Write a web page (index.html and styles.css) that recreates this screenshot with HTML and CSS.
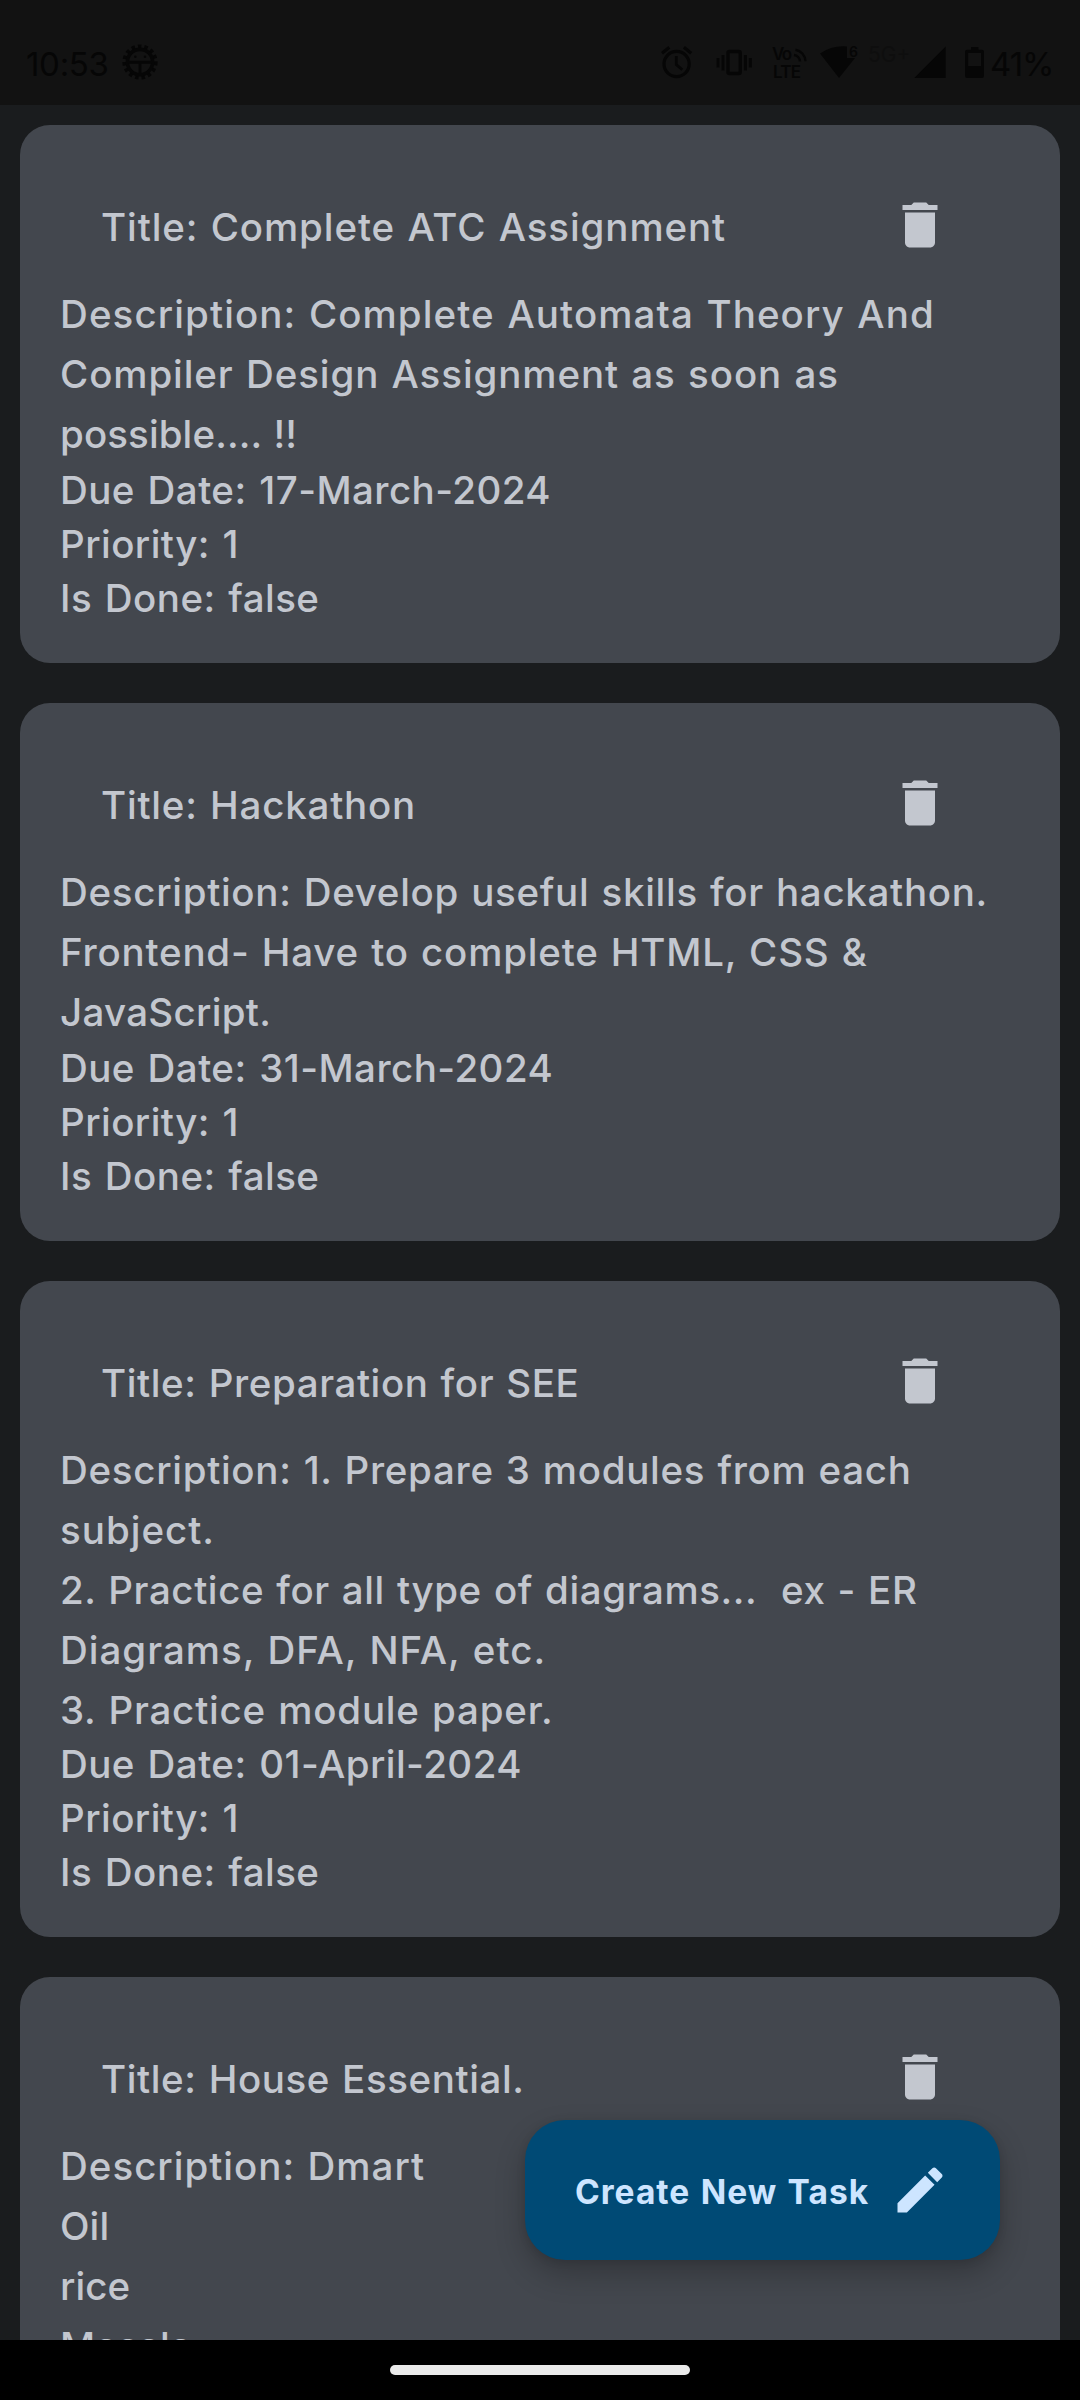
FILE: index.html
```html
<!DOCTYPE html>
<html lang="en">
<head>
<meta charset="utf-8">
<title>Tasks</title>
<link rel="stylesheet" href="styles.css">
</head>
<body>
<svg class="defs" aria-hidden="true">
  <symbol id="trash" viewBox="0 0 24 24"><path d="M6 19c0 1.1.9 2 2 2h8c1.1 0 2-.9 2-2V7H6v12zM19 4h-3.5l-1-1h-5l-1 1H5v2h14V4z"/></symbol>
</svg>
<div class="screen">
  <header class="status">
    <span class="clock">10:53</span>
    <svg class="s-bug" width="36" height="36" viewBox="122 44 36 36">
      <circle cx="140" cy="62" r="15.4" fill="none" stroke="#060606" stroke-width="4.4" stroke-dasharray="3.4 2.97"/>
      <circle cx="140" cy="62" r="12.6" fill="none" stroke="#060606" stroke-width="3.6"/>
      <path d="M128 62.2h24M140 62v13" stroke="#060606" stroke-width="3"/>
      <circle cx="135.3" cy="56.8" r="1.3"/><circle cx="145" cy="56.8" r="1.3"/>
    </svg>
    <span class="grow"></span>
    <svg class="s-alarm" width="32" height="36" viewBox="661 44 32 36" fill="none" stroke="#060606">
      <circle cx="676.6" cy="64" r="12.6" stroke-width="3.2"/>
      <path d="M676.3 56v8.5l6 5.2" stroke-width="2.8"/>
      <path d="M662 53.3l7.3-6M691.2 53.3l-7.3-6" stroke-width="3.2"/>
    </svg>
    <svg class="s-vibrate" width="36" height="36" viewBox="716 44 36 36" fill="none" stroke="#060606" stroke-width="3">
      <rect x="728" y="51.5" width="12.2" height="22" rx="1.5" stroke-width="3.4"/>
      <path d="M718 58v9.5M723 55v15.5M745.4 55v15.5M750.3 58v9.5"/>
    </svg>
    <svg class="s-volte" width="36" height="36" viewBox="772 44 36 36">
      <text x="772" y="60" class="volte" textLength="20">Vo</text>
      <text x="773" y="77.5" class="volte" textLength="28">LTE</text>
      <path d="M794 55a7 7 0 0 1 6 6.5M795.5 49.8a12 12 0 0 1 10 11.5" fill="none" stroke="#060606" stroke-width="2.4"/>
    </svg>
    <svg class="s-wifi" width="38" height="36" viewBox="820 44 38 36">
      <path d="M820 53.5Q832 45.2 847 46.4V58h8L839 78z"/>
      <text x="849" y="56.5" class="six">6</text>
    </svg>
    <span class="network">5G+</span>
    <svg class="s-signal" width="32" height="36" viewBox="914 44 32 36"><path d="M945.7 46.5V78H914.3z"/></svg>
    <svg class="s-battery" width="20" height="36" viewBox="965 44 20 36">
      <path fill-rule="evenodd" d="M971 47h7.5v2.7h3.5a2 2 0 0 1 2 2V76a2 2 0 0 1-2 2h-15a2 2 0 0 1-2-2V51.7a2 2 0 0 1 2-2h4zM968.2 53v13h12.9V53z"/>
    </svg>
    <span class="percent">41%</span>
  </header>

  <main class="list">
    <article class="card">
      <div class="head"><h2 class="title t15">Title: Complete ATC Assignment</h2><svg class="icon"><use href="#trash"/></svg></div>
      <p class="desc"><span class="line t18">Description: Complete Automata Theory And</span><span class="line t15">Compiler Design Assignment as soon as</span><span class="line t7">possible.... !!</span></p>
      <div class="meta"><span>Due Date: 17-March-2024</span><span>Priority: 1</span><span>Is Done: false</span></div>
    </article>
    <article class="card">
      <div class="head"><h2 class="title">Title: Hackathon</h2><svg class="icon"><use href="#trash"/></svg></div>
      <p class="desc"><span class="line t13">Description: Develop useful skills for hackathon.</span><span class="line">Frontend- Have to complete HTML, CSS &amp;</span><span class="line t11">JavaScript.</span></p>
      <div class="meta"><span>Due Date: 31-March-2024</span><span>Priority: 1</span><span>Is Done: false</span></div>
    </article>
    <article class="card tall">
      <div class="head"><h2 class="title t12">Title: Preparation for SEE</h2><svg class="icon"><use href="#trash"/></svg></div>
      <p class="desc"><span class="line t13">Description: 1. Prepare 3 modules from each</span><span class="line t17">subject.</span><span class="line t12">2. Practice for all type of diagrams...  ex - ER</span><span class="line t17">Diagrams, DFA, NFA, etc.</span><span class="line">3. Practice module paper.</span></p>
      <div class="meta"><span>Due Date: 01-April-2024</span><span>Priority: 1</span><span>Is Done: false</span></div>
    </article>
    <article class="card">
      <div class="head"><h2 class="title t12">Title: House Essential.</h2><svg class="icon"><use href="#trash"/></svg></div>
      <p class="desc"><span class="line t17">Description: Dmart</span><span class="line t7">Oil</span><span class="line t7">rice</span><span class="line t7">Masala</span></p>
    </article>
    <button class="fab"><span>Create New Task</span><svg class="icon" viewBox="0 0 24 24"><path d="M3 17.25V21h3.75L17.81 9.94l-3.75-3.75L3 17.25zM20.71 7.04c.39-.39.39-1.02 0-1.41l-2.34-2.34c-.39-.39-1.02-.39-1.41 0l-1.83 1.83 3.75 3.75 1.83-1.83z"/></svg></button>
  </main>
  <footer class="nav"><span class="pill"></span></footer>
</div>
</body>
</html>
```
FILE: styles.css
```css
* { box-sizing: border-box; margin: 0; padding: 0; }
body { background: #1a1c1e; font-family: Inter, "Open Sans", sans-serif; }
.defs { display: none; }
.screen { width: 1080px; height: 2400px; display: flex; flex-direction: column; overflow: hidden; background: #1a1c1e; }

.status { flex: none; height: 105px; padding: 44px 27px 0 26px; display: flex; align-items: flex-start; background: #121212; color: #060606; fill: #060606; }
.status svg { flex: none; display: block; }
.grow { flex: 1; }
.clock { width: 82px; font-size: 33px; line-height: 40px; letter-spacing: -0.3px; }
.s-bug { margin-left: 14px; }
.s-vibrate { margin-left: 23px; }
.s-volte { margin-left: 20px; }
.s-wifi { margin-left: 12px; }
.network { width: 41px; margin-left: 10px; font-size: 21px; line-height: 22px; color: #0e0e0e; }
.s-signal { margin-left: 5px; }
.s-battery { margin-left: 19px; }
.percent { width: 63px; margin-left: 5px; font-size: 33px; line-height: 40px; letter-spacing: -1px; white-space: nowrap; }
.volte { font: 600 17px Inter, sans-serif; }
.six { font: 600 14px Inter, sans-serif; }

.list { position: relative; flex: 1; min-height: 0; overflow: hidden; padding: 20px; display: flex; flex-direction: column; gap: 40px; }
.card { flex: none; padding: 40px 40px 38px; border-radius: 30px; background: #43474e; color: #c3c7cf; font-size: 38.5px; font-weight: 500; word-spacing: 1.2px; }
.head { height: 119px; padding: 0 70px 0 41px; display: flex; align-items: center; justify-content: space-between; }
.title { padding-top: 4px; font-size: 38.5px; font-weight: 500; line-height: 60px; letter-spacing: 0.8px; white-space: nowrap; }
.icon { flex: none; width: 60px; height: 60px; fill: currentColor; }
.line { display: block; line-height: 60px; letter-spacing: 0.8px; white-space: pre; }
.meta { display: flex; flex-direction: column; margin-top: -1px; line-height: 54px; letter-spacing: 0.45px; word-spacing: 2px; }
.tall .meta { margin-top: -3px; }

.t7 { letter-spacing: 0.1px; }
.t11 { letter-spacing: 0.3px; }
.t12 { letter-spacing: 0.6px; }
.t13 { letter-spacing: 0.7px; }
.t15 { letter-spacing: 0.9px; }
.t17 { letter-spacing: 1px; }
.t18 { letter-spacing: 1.1px; }

.fab { position: absolute; right: 80px; bottom: 80px; width: 475px; height: 140px; padding: 0 50px; display: flex; align-items: center; justify-content: space-between; border: 0; border-radius: 40px; background: #004a75; color: #cde5ff; font: 700 33.5px Inter, sans-serif; letter-spacing: 1px; word-spacing: 1.5px; white-space: nowrap; box-shadow: 0 14px 30px rgba(0, 0, 0, 0.24), 0 2px 8px rgba(0, 0, 0, 0.1); }
.fab span { padding-top: 3px; }

.nav { flex: none; height: 60px; display: flex; align-items: center; justify-content: center; background: #000; }
.pill { width: 300px; height: 10px; border-radius: 5px; background: #ebebeb; }
```
